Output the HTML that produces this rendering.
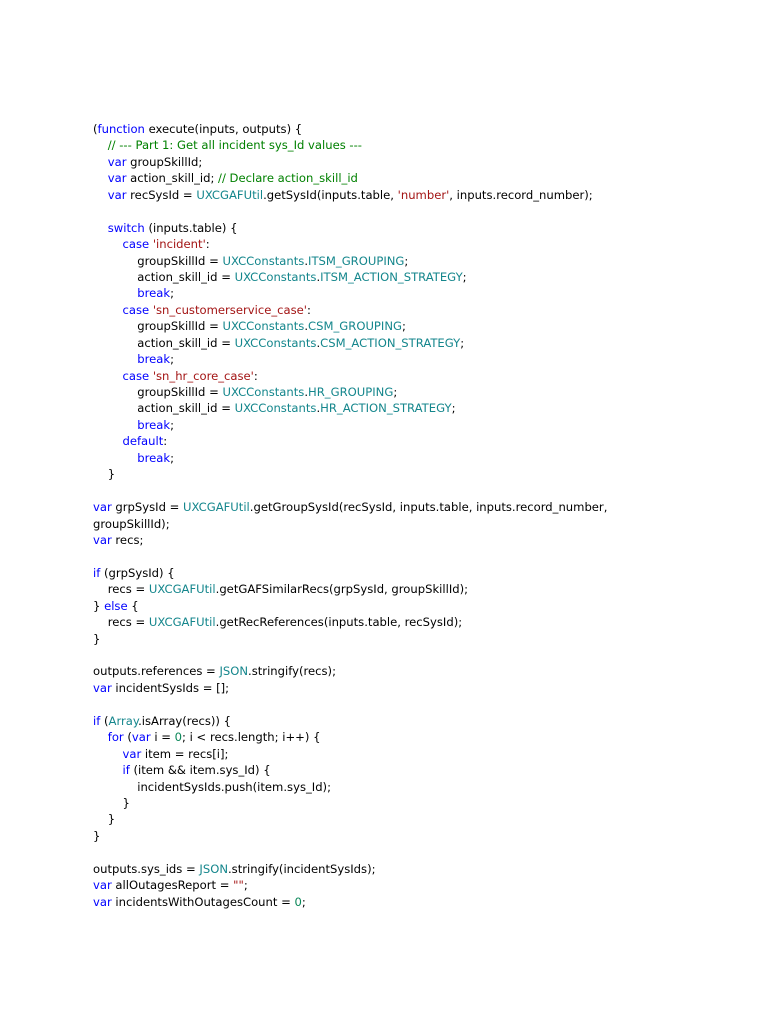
<!DOCTYPE html>
<html><head><meta charset="utf-8"><style>
html,body{margin:0;padding:0;background:#fff;width:768px;height:1024px;overflow:hidden}
pre{position:absolute;left:93px;top:121px;margin:0;font-family:"DejaVu Sans",sans-serif;font-size:11.6px;line-height:16.43px;color:#000;white-space:pre}
.k{color:#0000ff}.c{color:#008000}.s{color:#a31515}.t{color:#14868c}.n{color:#098658}
</style></head><body>
<pre>(<span class="k">function</span> execute(inputs, outputs) {
    <span class="c">// --- Part 1: Get all incident sys_Id values ---</span>
    <span class="k">var</span> groupSkillId;
    <span class="k">var</span> action_skill_id; <span class="c">// Declare action_skill_id</span>
    <span class="k">var</span> recSysId = <span class="t">UXCGAFUtil</span>.getSysId(inputs.table, <span class="s">'number'</span>, inputs.record_number);

    <span class="k">switch</span> (inputs.table) {
        <span class="k">case</span> <span class="s">'incident'</span>:
            groupSkillId = <span class="t">UXCConstants</span>.<span class="t">ITSM_GROUPING</span>;
            action_skill_id = <span class="t">UXCConstants</span>.<span class="t">ITSM_ACTION_STRATEGY</span>;
            <span class="k">break</span>;
        <span class="k">case</span> <span class="s">'sn_customerservice_case'</span>:
            groupSkillId = <span class="t">UXCConstants</span>.<span class="t">CSM_GROUPING</span>;
            action_skill_id = <span class="t">UXCConstants</span>.<span class="t">CSM_ACTION_STRATEGY</span>;
            <span class="k">break</span>;
        <span class="k">case</span> <span class="s">'sn_hr_core_case'</span>:
            groupSkillId = <span class="t">UXCConstants</span>.<span class="t">HR_GROUPING</span>;
            action_skill_id = <span class="t">UXCConstants</span>.<span class="t">HR_ACTION_STRATEGY</span>;
            <span class="k">break</span>;
        <span class="k">default</span>:
            <span class="k">break</span>;
    }

<span class="k">var</span> grpSysId = <span class="t">UXCGAFUtil</span>.getGroupSysId(recSysId, inputs.table, inputs.record_number,
groupSkillId);
<span class="k">var</span> recs;

<span class="k">if</span> (grpSysId) {
    recs = <span class="t">UXCGAFUtil</span>.getGAFSimilarRecs(grpSysId, groupSkillId);
} <span class="k">else</span> {
    recs = <span class="t">UXCGAFUtil</span>.getRecReferences(inputs.table, recSysId);
}

outputs.references = <span class="t">JSON</span>.stringify(recs);
<span class="k">var</span> incidentSysIds = [];

<span class="k">if</span> (<span class="t">Array</span>.isArray(recs)) {
    <span class="k">for</span> (<span class="k">var</span> i = <span class="n">0</span>; i &lt; recs.length; i++) {
        <span class="k">var</span> item = recs[i];
        <span class="k">if</span> (item &amp;&amp; item.sys_Id) {
            incidentSysIds.push(item.sys_Id);
        }
    }
}

outputs.sys_ids = <span class="t">JSON</span>.stringify(incidentSysIds);
<span class="k">var</span> allOutagesReport = <span class="s">""</span>;
<span class="k">var</span> incidentsWithOutagesCount = <span class="n">0</span>;</pre>
</body></html>
